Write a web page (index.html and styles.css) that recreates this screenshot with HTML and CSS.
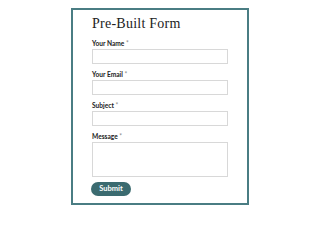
FILE: index.html
```html
<!DOCTYPE html>
<html lang="en">
<head>
<meta charset="utf-8">
<title>Pre-Built Form</title>
<link rel="stylesheet" href="styles.css">
</head>
<body>
<form class="card">
  <h1 class="title">Pre-Built Form</h1>
  <div class="field">
    <label class="label">Your Name <span class="req">*</span></label>
    <input class="input" type="text">
  </div>
  <div class="field">
    <label class="label">Your Email <span class="req">*</span></label>
    <input class="input" type="text">
  </div>
  <div class="field">
    <label class="label">Subject <span class="req">*</span></label>
    <input class="input" type="text">
  </div>
  <div class="field">
    <label class="label">Message <span class="req">*</span></label>
    <textarea class="input area"></textarea>
  </div>
  <button class="submit" type="button">Submit</button>
</form>
</body>
</html>
```
FILE: styles.css
```css
html, body {
  margin: 0;
  padding: 0;
  background: #ffffff;
}
body {
  padding-top: 8px;
  padding-left: 71px;
}
.card {
  box-sizing: border-box;
  width: 178px;
  border: 2px solid #4a7d83;
  padding: 5px 19px 7px 19px;
  display: flex;
  flex-direction: column;
  align-items: flex-start;
}
.title {
  margin: 0 0 6px 0;
  font-family: "Liberation Serif", serif;
  font-weight: normal;
  font-size: 14px;
  line-height: 18px;
  letter-spacing: 0.25px;
  color: #222222;
}
.field {
  display: flex;
  flex-direction: column;
  width: 136px;
  margin-bottom: 6px;
}
.label {
  font-family: Lato, sans-serif;
  font-weight: 700;
  font-size: 6.6px;
  line-height: 8px;
  height: 8px;
  color: #222222;
  margin-bottom: 2px;
}
.req {
  font-weight: 400;
  color: #8a8a8a;
}
.input {
  box-sizing: border-box;
  width: 136px;
  height: 15px;
  margin: 0;
  padding: 0;
  border: 1px solid #d8d8d8;
  border-radius: 0;
  background: #ffffff;
  display: block;
  outline: none;
}
.area {
  height: 35px;
  resize: none;
}
.field:last-of-type {
  margin-bottom: 5px;
}
.submit {
  box-sizing: border-box;
  width: 40px;
  height: 14px;
  margin: 0 0 0 -1px;
  padding: 0;
  border: none;
  border-radius: 7px;
  background: #3b6b70;
  color: #ffffff;
  font-family: Lato, sans-serif;
  font-weight: 700;
  font-size: 7.5px;
  line-height: 14px;
  text-align: center;
}
```
